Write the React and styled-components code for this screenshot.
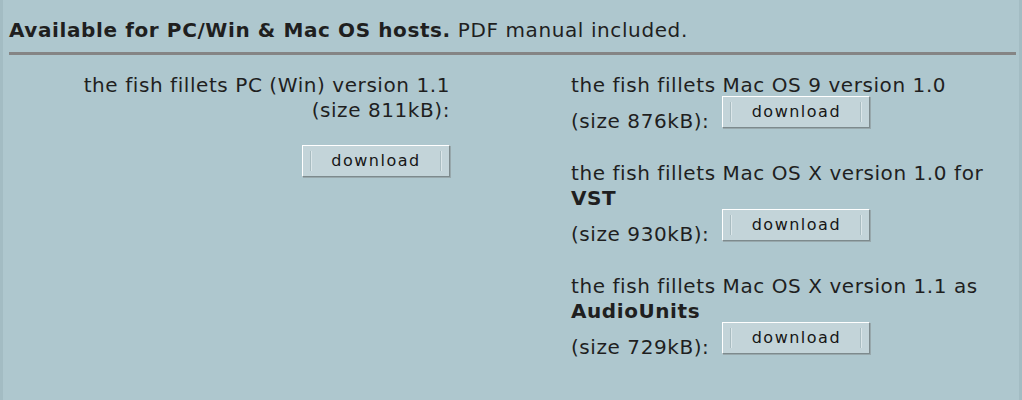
import React from 'react'
import styled, { createGlobalStyle } from 'styled-components'

const GlobalStyle = createGlobalStyle`
  html, body {
    margin: 0;
    padding: 0;
    background: #aec7ce;
  }
  body {
    font-family: "DejaVu Sans", Verdana, sans-serif;
    color: #1f1f1f;
  }
`

const Page = styled.div`
  width: 1022px;
  height: 400px;
  box-sizing: border-box;
  background: #aec7ce;
  border-left: 3px solid #a3bcc3;
  border-right: 3px solid #a3bcc3;
  padding: 0 3px 0 6px;
  overflow: hidden;
`

const Header = styled.div`
  font-size: 20px;
  line-height: 25px;
  letter-spacing: 0.6px;
  padding-top: 18px;
  padding-bottom: 9px;
  border-bottom: 3px solid #858585;
`

const Bold = styled.b`
  font-weight: bold;
`

const Columns = styled.div`
  display: grid;
  grid-template-columns: 441px 1fr;
  column-gap: 121px;
  padding-top: 18px;
  font-size: 20px;
  line-height: 25px;
  letter-spacing: 0.57px;
`

const LeftCol = styled.div`
  text-align: right;
  display: flex;
  flex-direction: column;
  align-items: flex-end;
`

const RightCol = styled.div`
  display: flex;
  flex-direction: column;
  gap: 27px;
`

const Block = styled.div`
  display: flex;
  flex-direction: column;
`

const SizeLine = styled.div`
  display: flex;
  align-items: flex-end;
  gap: 13px;
`

const DownloadButton = styled.span`
  position: relative;
  display: inline-flex;
  align-items: center;
  justify-content: center;
  box-sizing: border-box;
  width: 148px;
  height: 32px;
  margin-top: ${p => p.$top || 0}px;
  margin-bottom: ${p => p.$bottom || 0}px;
  background: #c3d4d9;
  border: 1px solid;
  border-color: #ffffff #7d8a8d #7d8a8d #ffffff;
  box-shadow: 1px 1px 0 #98a8ac;
  font-family: "DejaVu Sans", Verdana, sans-serif;
  font-size: 16px;
  letter-spacing: 1.5px;
  color: #161616;
  line-height: 1;

  &::before,
  &::after {
    content: '';
    position: absolute;
    top: 5px;
    bottom: 5px;
    width: 1px;
    background: #a9bcc1;
    box-shadow: 1px 0 0 #dbe6e9;
  }
  &::before {
    left: 7px;
  }
  &::after {
    right: 8px;
  }
`

export default function App() {
  return (
    <>
      <GlobalStyle />
      <Page>
        <Header>
          <Bold>Available for PC/Win &amp; Mac OS hosts.</Bold> PDF manual included.
        </Header>
        <Columns>
          <LeftCol>
            <div>the fish fillets PC (Win) version 1.1</div>
            <div>(size 811kB):</div>
            <DownloadButton $top={22}>download</DownloadButton>
          </LeftCol>
          <RightCol>
            <Block>
              <div>the fish fillets Mac OS 9 version 1.0</div>
              <SizeLine>
                <span>(size 876kB):</span>
                <DownloadButton $top={-2} $bottom={6}>download</DownloadButton>
              </SizeLine>
            </Block>
            <Block>
              <div>the fish fillets Mac OS X version 1.0 for</div>
              <div><Bold>VST</Bold></div>
              <SizeLine>
                <span>(size 930kB):</span>
                <DownloadButton $top={-2} $bottom={6}>download</DownloadButton>
              </SizeLine>
            </Block>
            <Block>
              <div>the fish fillets Mac OS X version 1.1 as</div>
              <div><Bold>AudioUnits</Bold></div>
              <SizeLine>
                <span>(size 729kB):</span>
                <DownloadButton $top={-2} $bottom={6}>download</DownloadButton>
              </SizeLine>
            </Block>
          </RightCol>
        </Columns>
      </Page>
    </>
  )
}
